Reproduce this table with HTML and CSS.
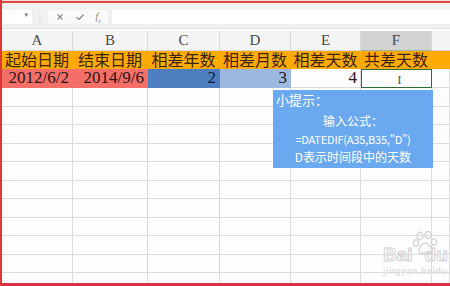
FILE: index.html
```html
<!DOCTYPE html>
<html lang="zh">
<head>
<meta charset="utf-8">
<link rel="stylesheet" href="styles.css">
</head>
<body>
<div class="frame">
  <div class="ribbon"></div>
  <div class="formula-bar">
    <div class="namebox"><span class="caret">▾</span></div>
    <div class="sep">⋮</div>
    <div class="fx-box">
      <svg class="ico" viewBox="0 0 10 10" width="10" height="10"><path d="M2.5 2.5 L7.5 7.5 M7.5 2.5 L2.5 7.5" stroke="#888" stroke-width="1.1" fill="none"/></svg>
      <svg class="ico" viewBox="0 0 10 10" width="10" height="10"><path d="M1.5 5.2 L4 7.5 L8.5 2.5" stroke="#888" stroke-width="1.2" fill="none"/></svg>
      <span class="fx">f<sub>x</sub></span>
    </div>
    <div class="input"></div>
  </div>
  <div class="sheet">
    <div class="grid">
      <div class="ch">A</div><div class="ch">B</div><div class="ch">C</div><div class="ch">D</div><div class="ch">E</div><div class="ch ch-active">F</div><div class="ch ch-end"></div>

      <div class="c head">起始日期</div><div class="c head">结束日期</div><div class="c head">相差年数</div><div class="c head">相差月数</div><div class="c head">相差天数</div><div class="c head">共差天数</div><div class="c head"></div>

      <div class="c num red">2012/6/2</div><div class="c num red">2014/9/6</div><div class="c num blue">2</div><div class="c num lblue">3</div><div class="c num">4</div><div class="c sel"><span class="ibeam">I</span></div><div class="c"></div>
    </div>
    <div class="grid empty">
      <div class="c"></div><div class="c"></div><div class="c"></div><div class="c"></div><div class="c"></div><div class="c"></div><div class="c"></div>
      <div class="c"></div><div class="c"></div><div class="c"></div><div class="c"></div><div class="c"></div><div class="c"></div><div class="c"></div>
      <div class="c"></div><div class="c"></div><div class="c"></div><div class="c"></div><div class="c"></div><div class="c"></div><div class="c"></div>
      <div class="c"></div><div class="c"></div><div class="c"></div><div class="c"></div><div class="c"></div><div class="c"></div><div class="c"></div>
      <div class="c"></div><div class="c"></div><div class="c"></div><div class="c"></div><div class="c"></div><div class="c"></div><div class="c"></div>
      <div class="c"></div><div class="c"></div><div class="c"></div><div class="c"></div><div class="c"></div><div class="c"></div><div class="c"></div>
      <div class="c"></div><div class="c"></div><div class="c"></div><div class="c"></div><div class="c"></div><div class="c"></div><div class="c"></div>
      <div class="c"></div><div class="c"></div><div class="c"></div><div class="c"></div><div class="c"></div><div class="c"></div><div class="c"></div>
      <div class="c"></div><div class="c"></div><div class="c"></div><div class="c"></div><div class="c"></div><div class="c"></div><div class="c"></div>
      <div class="c"></div><div class="c"></div><div class="c"></div><div class="c"></div><div class="c"></div><div class="c"></div><div class="c"></div>
      <div class="c"></div><div class="c"></div><div class="c"></div><div class="c"></div><div class="c"></div><div class="c"></div><div class="c"></div>
    </div>

    <div class="tip">
      <div class="tip-title">小提示：</div>
      <div class="tip-body">
        <div>输入公式：</div>
        <div class="mono">=DATEDIF(A35,B35,"D")</div>
        <div>D表示时间段中的天数</div>
      </div>
    </div>

    <div class="watermark">
      <div class="wm-top"><span class="wm-bai">Bai</span><svg class="paw" viewBox="0 0 26 24" width="26" height="24"><g fill="none" stroke="#d8d8d8" stroke-width="1.6"><ellipse cx="7" cy="5" rx="3" ry="3.6"/><ellipse cx="15" cy="4" rx="3" ry="3.6"/><ellipse cx="3" cy="12" rx="2.6" ry="3.2"/><ellipse cx="21" cy="11" rx="2.6" ry="3.2"/><path d="M6 21 C6 15 10 12 12 12 C15 12 19 16 19 20 C19 23 15 22 12 22 C9 22 6 23 6 21 Z"/></g></svg><span class="wm-du">du</span><span class="wm-jy">经验</span></div>
      <div class="wm-url">jingyan.baidu.com</div>
    </div>
  </div>
</div>
</body>
</html>
```

FILE: styles.css
```css
html, body {
  margin: 0;
  padding: 0;
}
body {
  width: 450px;
  height: 286px;
  overflow: hidden;
  background: #fdfdfd;
}
.frame {
  position: relative;
  width: 450px;
  height: 286px;
  box-sizing: border-box;
  border-left: 2px solid #e0363a;
  border-bottom: 3px solid #d8304a;
  overflow: hidden;
  display: flex;
  flex-direction: column;
}
.ribbon {
  height: 1px;
  border-bottom: 2px solid #e2473f;
  background: #e8dede;
  flex: none;
}
.formula-bar {
  flex: none;
  height: 25px;
  background: #f1f1f1;
  display: flex;
  align-items: center;
  border-bottom: 1px solid #e4e4e4;
}
.namebox {
  width: 30px;
  height: 14px;
  margin-top: 3px;
  background: #ffffff;
  position: relative;
}
.caret {
  position: absolute;
  right: 4px;
  top: 1px;
  font-size: 7px;
  color: #777;
  font-family: "DejaVu Sans", sans-serif;
}
.sep {
  width: 16px;
  text-align: center;
  color: #c8c8c8;
  font-size: 10px;
  margin-top: 3px;
  font-family: "DejaVu Sans", sans-serif;
}
.fx-box {
  width: 60px;
  height: 14px;
  margin-top: 3px;
  background: #fafafa;
  display: flex;
  align-items: center;
  justify-content: space-around;
  padding: 0 2px;
  box-sizing: border-box;
}
.fx {
  font-family: "Liberation Serif", serif;
  font-style: italic;
  font-size: 10px;
  color: #888;
}
.fx sub {
  font-size: 6px;
}
.input {
  flex: 1;
  height: 14px;
  margin-top: 3px;
  margin-left: 4px;
  background: #ffffff;
}
.sheet {
  position: relative;
  flex: 1;
  margin-top: 2px;
}
.grid {
  display: grid;
  grid-template-columns: 71px 75px 72px 71px 70px 71px 1fr;
  grid-template-rows: 20px 18px 19px;
}
.grid.empty {
  grid-template-rows: repeat(11, 18.5px);
}
.ch {
  background: #f4f4f4;
  border-right: 1px solid #dadada;
  border-bottom: 1px solid #d6d6d6;
  text-align: center;
  font-family: "Liberation Serif", serif;
  font-size: 15px;
  line-height: 19px;
  color: #4a4a4a;
}
.ch-active {
  background: #d3d3d3;
  border-bottom: 1px solid #9cb59f;
}
.ch-end {
  border-right: none;
}
.c {
  border-right: 1px solid #dcdcdc;
  border-bottom: 1px solid #dcdcdc;
  box-sizing: border-box;
  min-width: 0;
}
.head {
  background: #fdaa05;
  border-color: #fdaa05;
  font-family: "Noto Sans CJK SC", sans-serif;
  font-size: 16px;
  line-height: 17px;
  color: #3b2410;
  text-align: center;
  white-space: nowrap;
}
.num {
  font-family: "Liberation Serif", serif;
  font-size: 17px;
  line-height: 18px;
  color: #2a1414;
  text-align: right;
  padding-right: 3px;
}
.red {
  background: #f36f68;
  border-color: #f36f68;
}
.blue {
  background: #4d7fc0;
  border-color: #4d7fc0;
  color: #0e1a33;
}
.lblue {
  background: #9cb8de;
  border-color: #9cb8de;
}
.sel {
  border: 1.5px solid #2f6a3f;
  text-align: center;
}
.ibeam {
  font-family: "Liberation Serif", serif;
  font-size: 13px;
  line-height: 16px;
  color: #555;
  margin-left: 6px;
}
.tip {
  position: absolute;
  left: 271px;
  top: 59px;
  width: 160px;
  height: 78px;
  background: #6aa9ef;
  color: #ffffff;
  font-family: "Noto Sans CJK SC", sans-serif;
  font-size: 12px;
  box-sizing: border-box;
  padding: 2px 3px;
}
.tip-title {
  font-size: 13px;
  line-height: 16px;
}
.tip-body {
  text-align: center;
  margin-top: 4px;
  line-height: 18px;
}
.mono {
  font-size: 11px;
  letter-spacing: -0.2px;
}
.watermark {
  position: absolute;
  left: 381px;
  top: 204px;
  color: #dcdcdc;
  font-family: "Liberation Sans", sans-serif;
  white-space: nowrap;
}
.wm-top {
  display: flex;
  align-items: flex-end;
  height: 30px;
}
.wm-bai, .wm-du {
  font-size: 19px;
  font-weight: bold;
  line-height: 20px;
  color: transparent;
  -webkit-text-stroke: 1px #d4d4d4;
}
.paw {
  margin: 0 -14px 10px 0;
}
.wm-jy {
  font-family: "Noto Sans CJK SC", sans-serif;
  font-size: 17px;
  color: #dddddd;
  line-height: 20px;
}
.wm-url {
  font-size: 9px;
  font-weight: bold;
  color: #dddddd;
  margin-top: 1px;
  letter-spacing: 0.5px;
}
```
